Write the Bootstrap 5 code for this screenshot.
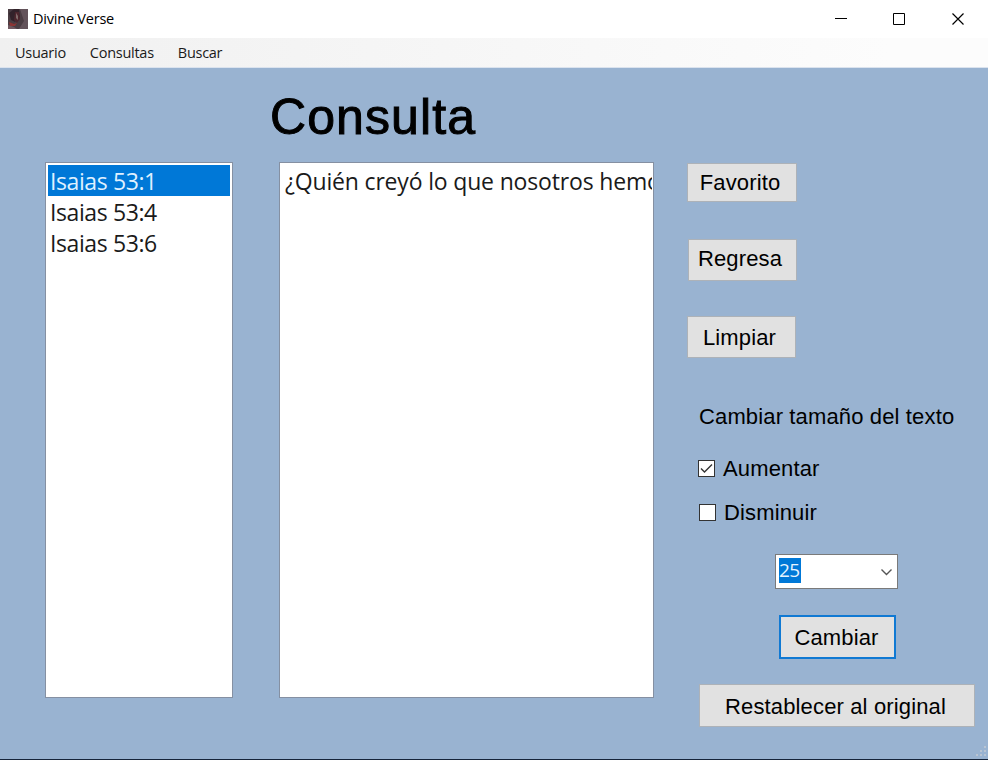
<!DOCTYPE html>
<html lang="es">
<head>
<meta charset="utf-8">
<meta name="viewport" content="width=device-width, initial-scale=1">
<title>Divine Verse</title>
<link rel="stylesheet" href="https://cdn.jsdelivr.net/npm/bootstrap@5.3.0/dist/css/bootstrap.min.css">
<style>
  body { width: 988px; height: 760px; background: #99b3d1; color: #000; font-family: "Liberation Sans", Arial, sans-serif; }
  .ui { font-family: "Open Sans", "Noto Sans", sans-serif; }
  .titlebar { height: 38px; background: #fff; padding-left: 8px; }
  .app-name { font-size: 14.5px; margin-left: 5px; letter-spacing: -.22px; line-height: 20px; }
  .win-btn { width: 58.5px; height: 38px; }
  .menubar { height: 30px; background: linear-gradient(90deg, #f0f0f0, #fcfcfc 90%); border-bottom: 1px solid #dbe3ee; padding-left: 15px; }
  .menubar a { font-size: 14.5px; color: #1a1a1a; line-height: 29px; letter-spacing: -.27px; }
  .workspace { height: 691px; padding-left: 45px; }
  .heading { height: 94px; padding-left: 225px; font-size: 50px; line-height: 98px; letter-spacing: 1.1px; -webkit-text-stroke: 1px #000; }
  .pane { height: 536px; background: #fff; border: 1px solid #8590a2; font-size: 23px; line-height: 31px; color: #1a1a1a; }
  .verses { width: 188px; padding: 2px; }
  .verses .list-group-item { height: 31px; padding: 0 2px; background: #fff; color: #1a1a1a; border: 0; letter-spacing: -.4px; line-height: 32px; }
  .verses .list-group-item.active { background: #0078d7; color: #dff0ff; }
  .passage { width: 375px; margin-left: 46px; padding: 2px 1px 2px 5px; letter-spacing: -.17px; }
  .passage div { line-height: 33px; }
  .side { width: 301px; margin-left: 33px; padding-top: 1px; font-size: 22px; line-height: 25px; letter-spacing: .14px; }
  .side .btn { background: #e1e1e1; border: 1px solid #adb2b8; color: #000; font-size: 22px; line-height: 25px; padding: 0 4px 0 0; letter-spacing: .14px; }
  .btn-fav { width: 110px; height: 39px; }
  .side .btn-reg { width: 109px; height: 42px; margin: 37px 0 0 1px; padding: 0 5px 4px 0; }
  .btn-lim { width: 109px; height: 42px; margin-top: 35px; }
  .size-label { margin: 46px 0 0 12px; }
  .opt { height: 25px; gap: 8px; }
  .opt-up { margin: 27px 0 0 11px; }
  .opt-down { margin: 19px 0 0 12px; }
  .tick { width: 17px; height: 17px; background: #fff; border: 1px solid #333; }
  .combo { width: 123px; height: 35px; margin: 29px 0 0 88px; background: #fff; border: 1px solid #7a7a7a; padding: 0 4px 0 3px; }
  .combo .picked { background: #0078d7; color: #e5f3ff; font-size: 19px; line-height: 25px; letter-spacing: -.7px; width: 22px; height: 25px; margin-bottom: 2px; }
  .side .btn-cam { width: 117px; height: 44px; margin: 26px 0 0 92px; border: 2px solid #1079d3; padding-right: 2px; }
  .side .btn-res { width: 276px; height: 43px; margin: 25px 0 0 12px; padding: 2px 3px 0 0; }
  .bottom-edge { height: 1px; background: #16243a; }
  .grip { right: 1px; bottom: 2px; }
</style>
<script src="https://cdn.jsdelivr.net/npm/bootstrap@5.3.0/dist/js/bootstrap.bundle.min.js"></script>
</head>
<body class="overflow-hidden position-relative">
  <header class="titlebar ui d-flex align-items-center">
    <svg width="20" height="20" viewBox="0 0 20 20">
      <defs><filter id="soft"><feGaussianBlur stdDeviation=".7"/></filter></defs>
      <rect width="20" height="20" fill="#4a3d43"/>
      <g filter="url(#soft)">
        <path d="M12 0h8v20h-9l5-8z" fill="#64535a"/>
        <path d="M1 4l5-4 5 0 1 8-5 5-4-2z" fill="#30242c"/>
        <path d="M7 3l4 0 1 7-3 4-3-3z" fill="#4d282e"/>
        <path d="M8 4l2 3 0 4-2-2z" fill="#806a6b"/>
        <path d="M1 13l5 2 3-1-2 3-5 0z" fill="#8b3434"/>
        <path d="M0 16l6 2 3 2H0z" fill="#6f5960"/>
      </g>
    </svg>
    <span class="app-name">Divine Verse</span>
    <div class="d-flex ms-auto">
      <span class="win-btn"><svg width="58" height="38"><path d="M22 18.5h12" stroke="#000"/></svg></span>
      <span class="win-btn"><svg width="58" height="38"><path d="M22.5 13.5h11v11h-11z" fill="none" stroke="#000"/></svg></span>
      <span class="win-btn"><svg width="58" height="38"><path d="M22.5 13.5l11 11M33.5 13.5l-11 11" stroke="#000" stroke-width="1.2"/></svg></span>
    </div>
  </header>
  <nav class="menubar ui d-flex">
    <a class="text-decoration-none">Usuario</a>
    <a class="text-decoration-none ms-4">Consultas</a>
    <a class="text-decoration-none ms-4">Buscar</a>
  </nav>
  <main class="workspace">
    <h1 class="heading fw-normal m-0">Consulta</h1>
    <div class="d-flex">
      <div class="pane verses ui list-group rounded-0 flex-shrink-0">
        <div class="list-group-item active m-0">Isaias 53:1</div>
        <div class="list-group-item">Isaias 53:4</div>
        <div class="list-group-item">Isaias 53:6</div>
      </div>
      <div class="pane passage ui flex-shrink-0"><div class="overflow-hidden text-nowrap">¿Quién creyó lo que nosotros hemo</div></div>
      <div class="side d-flex flex-column align-items-start flex-shrink-0">
        <button class="btn btn-fav rounded-0">Favorito</button>
        <button class="btn btn-reg rounded-0">Regresa</button>
        <button class="btn btn-lim rounded-0">Limpiar</button>
        <div class="size-label text-nowrap">Cambiar tamaño del texto</div>
        <label class="opt opt-up d-flex align-items-center"><span class="tick d-flex"><svg width="15" height="15"><path d="M2 7.5l3.5 3.5L13 3.5" fill="none" stroke="#333" stroke-width="1.4"/></svg></span><span>Aumentar</span></label>
        <label class="opt opt-down d-flex align-items-center"><span class="tick"></span><span>Disminuir</span></label>
        <div class="combo ui d-flex align-items-center justify-content-between"><span class="picked">25</span><svg width="13" height="8"><path d="M1.5 1.5l5 5 5-5" fill="none" stroke="#555" stroke-width="1.4"/></svg></div>
        <button class="btn btn-cam rounded-0">Cambiar</button>
        <button class="btn btn-res rounded-0">Restablecer al original</button>
      </div>
    </div>
  </main>
  <div class="bottom-edge"></div>
  <svg class="grip position-absolute" width="12" height="12" fill="#b9c4d2"><path d="M9 0h2v2H9zM9 4h2v2H9zM9 8h2v2H9zM5 4h2v2H5zM5 8h2v2H5zM1 8h2v2H1z"/></svg>
</body>
</html>
